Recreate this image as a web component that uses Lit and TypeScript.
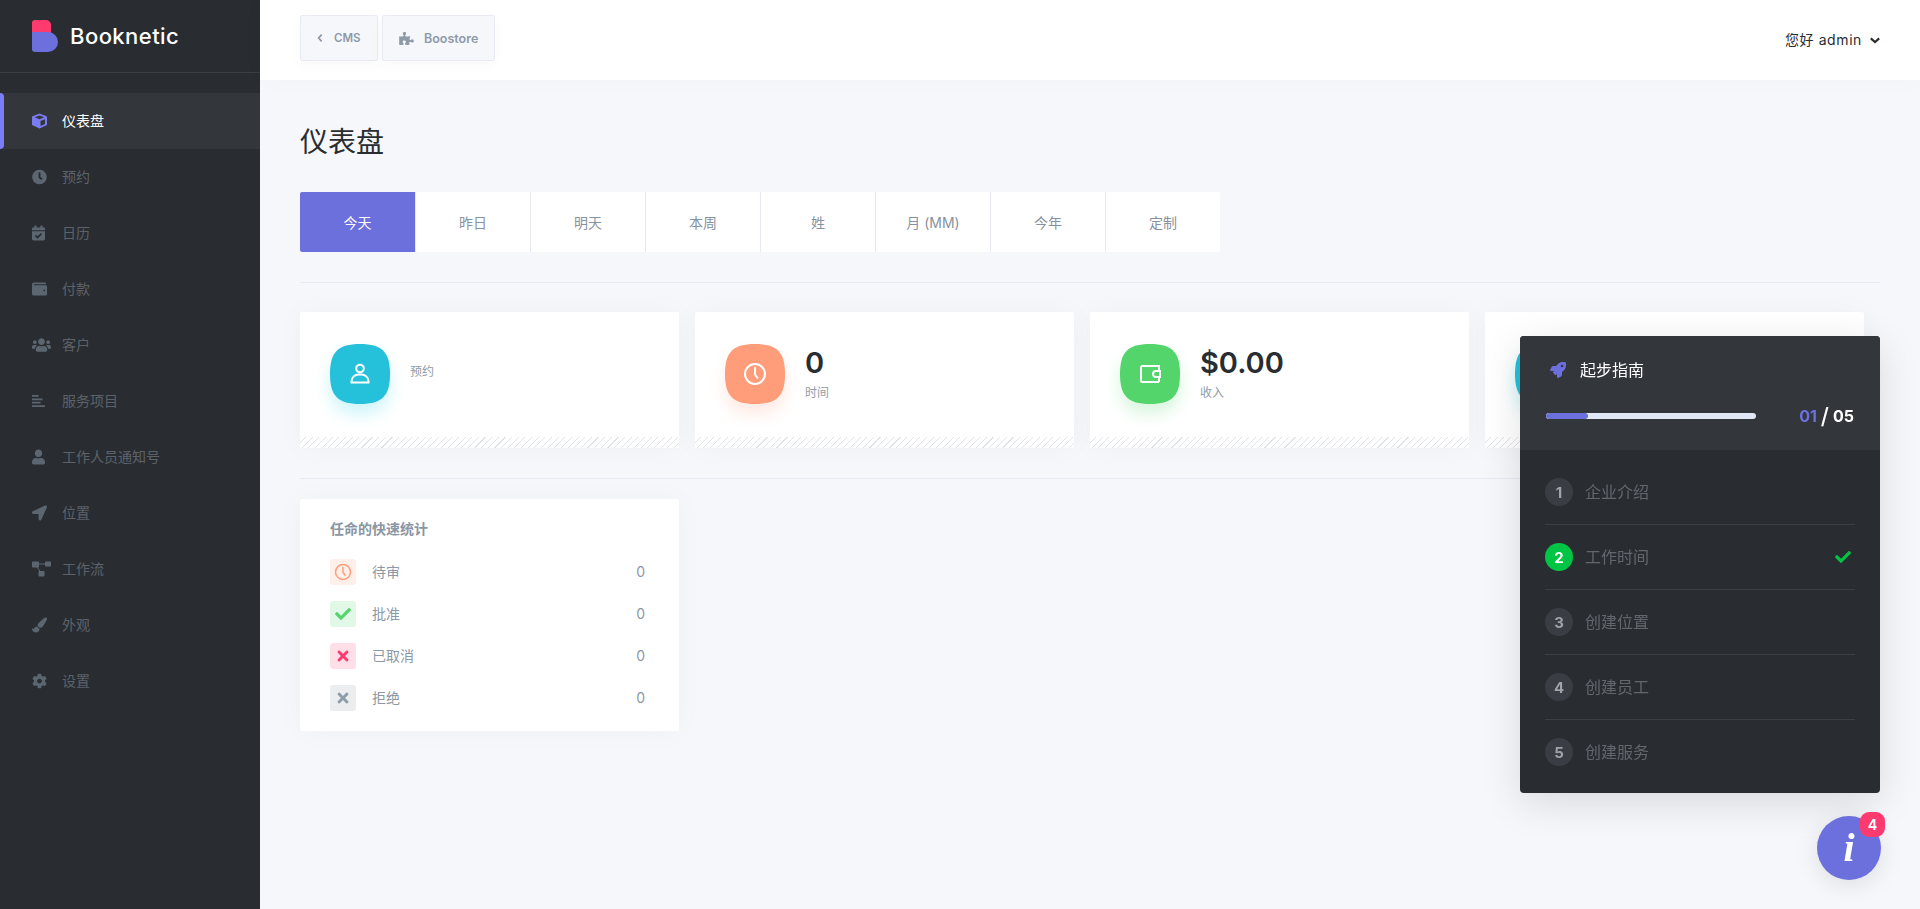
import { LitElement, css, html } from 'lit'
import { customElement } from 'lit/decorators.js'

// font awesome style glyphs, drawn inline since nothing can be loaded
const CLOCK = html`<svg viewBox="0 0 512 512"><path fill="currentColor" d="M256,8C119,8,8,119,8,256S119,504,256,504,504,393,504,256,393,8,256,8Zm92.49,313h0l-20,25a16,16,0,0,1-22.49,2.5h0l-67-49.72a40,40,0,0,1-15-31.23V112a16,16,0,0,1,16-16h32a16,16,0,0,1,16,16V256l58,42.5A16,16,0,0,1,348.49,321Z"/></svg>`
const CUBE = html`<svg viewBox="0 0 30 30"><path fill="currentColor" d="M15 0 29 5.5a1.5 1.5 0 0 1 1 1.4V22a1.5 1.5 0 0 1-.9 1.4L15 30 .9 23.4A1.5 1.5 0 0 1 0 22V6.900a1.500 1.500 0 0 1 1-1.400Z"/><path fill="#33363b" d="M15 4 24.500 7.600 15 11.300 5.500 7.600ZM17 15 26 11.500V21L17 25.200Z"/></svg>`
const CALENDAR = html`<svg viewBox="0 0 448 512"><path fill="currentColor" d="M96 0h48a16 16 0 0 1 16 16v48h128V16a16 16 0 0 1 16-16h48a16 16 0 0 1 16 16v48h48a32 32 0 0 1 32 32v64H0V96a32 32 0 0 1 32-32h48V16A16 16 0 0 1 96 0ZM0 192h448v272a48 48 0 0 1-48 48H48a48 48 0 0 1-48-48Zm338 96-24-24a12 12 0 0 0-17 0L189 371l-44-45a12 12 0 0 0-17 0l-24 24a12 12 0 0 0 0 17l76 77a12 12 0 0 0 17 0l141-139a12 12 0 0 0 0-17Z"/></svg>`
const WALLET = html`<svg viewBox="0 0 512 448"><path fill="currentColor" d="M461 96H80a16 16 0 0 1 0-32h384a16 16 0 0 0 16-16 48 48 0 0 0-48-48H64A64 64 0 0 0 0 64v320a64 64 0 0 0 64 64h397c28 0 51-21 51-48V144c0-27-23-48-51-48Zm-45 208a32 32 0 1 1 0-64 32 32 0 0 1 0 64Z"/></svg>`
const USERS = html`<svg viewBox="0 0 640 512"><path fill="currentColor" d="M96 224c35.300 0 64-28.700 64-64s-28.700-64-64-64-64 28.700-64 64 28.700 64 64 64zm448 0c35.300 0 64-28.700 64-64s-28.700-64-64-64-64 28.700-64 64 28.700 64 64 64zm32 32h-64c-17.600 0-33.500 7.100-45.100 18.600 40.300 22.100 68.900 62 75.100 109.400h66c17.700 0 32-14.300 32-32v-32c0-35.300-28.700-64-64-64zm-256 0c61.900 0 112-50.100 112-112S381.900 32 320 32 208 82.100 208 144s50.100 112 112 112zm76.800 32h-8.300c-20.800 10-43.900 16-68.500 16s-47.600-6-68.500-16h-8.300C179.600 288 128 339.600 128 403.200V432c0 26.500 21.500 48 48 48h288c26.500 0 48-21.500 48-48v-28.800c0-63.600-51.600-115.200-115.200-115.200zm-223.700-13.400C161.500 263.100 145.600 256 128 256H64c-35.300 0-64 28.700-64 64v32c0 17.700 14.300 32 32 32h65.900c6.300-47.400 34.900-87.300 75.200-109.400z"/></svg>`
const BARS = html`<svg viewBox="0 0 26 24"><path fill="currentColor" d="M0 0h13v3.600H0ZM0 6.800h21v3.600H0ZM0 13.600h17v3.600H0ZM0 20.400h26V24H0Z"/></svg>`
const USER = html`<svg viewBox="0 0 448 512"><path fill="currentColor" d="M224 256c70.700 0 128-57.300 128-128S294.700 0 224 0 96 57.300 96 128s57.300 128 128 128zm89.600 32h-16.700c-22.200 10.200-46.900 16-72.900 16s-50.600-5.800-72.900-16h-16.700C60.200 288 0 348.200 0 422.400V464c0 26.500 21.500 48 48 48h352c26.500 0 48-21.500 48-48v-41.600c0-74.200-60.200-134.400-134.400-134.400z"/></svg>`
const ARROW = html`<svg viewBox="0 0 512 512"><path fill="currentColor" d="M444.520 3.520L28.740 195.420c-47.970 22.390-31.980 92.750 19.190 92.750h175.910v175.910c0 51.170 70.360 67.170 92.750 19.190l191.900-415.780c15.990-38.390-25.590-79.970-63.970-63.970z"/></svg>`
const FLOW = html`<svg viewBox="0 0 38 30"><path fill="none" stroke="currentColor" stroke-width="2" d="M6 5H32M6 5 19 24"/><rect fill="currentColor" x="0" y="0" width="14" height="12" rx="1.500"/><rect fill="currentColor" x="26" y="0" width="12" height="10" rx="1.500"/><rect fill="currentColor" x="13" y="19" width="12" height="11" rx="1.500"/></svg>`
const BRUSH = html`<svg viewBox="0 0 512 512"><path fill="currentColor" d="M167.020 309.340c-40.120 2.580-76.530 17.860-97.190 72.300-2.350 6.210-8 9.980-14.590 9.980-11.110 0-45.460-27.670-55.250-34.350C0 439.620 37.930 512 128 512c75.860 0 128-43.770 128-120.190 0-3.110-.65-6.080-.97-9.130l-88.010-73.340zM457.890 0c-15.160 0-29.370 6.710-40.210 16.450C213.270 199.050 192 203.340 192 257.090c0 13.700 3.250 26.760 8.730 38.700l63.820 53.180c7.210 1.800 14.640 3.030 22.390 3.030 62.110 0 98.110-45.470 211.160-256.460 7.380-14.350 13.900-29.850 13.900-45.990C512 20.640 486 0 457.890 0z"/></svg>`
const COG = html`<svg viewBox="0 0 512 512"><path fill="currentColor" d="M487.400 315.700l-42.600-24.600c4.300-23.200 4.300-47 0-70.200l42.600-24.600c4.900-2.800 7.100-8.600 5.500-14-11.100-35.600-30-67.800-54.700-94.600-3.800-4.100-10-5.100-14.800-2.300L380.800 110c-17.900-15.400-38.500-27.300-60.800-35.100V25.800c0-5.600-3.900-10.500-9.400-11.700-36.700-8.200-74.300-7.800-109.200 0-5.500 1.200-9.400 6.100-9.400 11.700V75c-22.200 7.900-42.800 19.800-60.800 35.100L88.700 85.500c-4.900-2.800-11-1.900-14.800 2.300-24.700 26.700-43.600 58.900-54.700 94.600-1.700 5.400.6 11.200 5.500 14L67.300 221c-4.300 23.200-4.300 47 0 70.200l-42.600 24.600c-4.900 2.800-7.100 8.600-5.500 14 11.100 35.600 30 67.800 54.700 94.600 3.800 4.100 10 5.100 14.800 2.300l42.600-24.600c17.900 15.400 38.500 27.300 60.800 35.100v49.200c0 5.600 3.900 10.500 9.400 11.700 36.700 8.200 74.300 7.800 109.200 0 5.500-1.200 9.400-6.100 9.400-11.700v-49.200c22.200-7.900 42.800-19.800 60.800-35.100l42.600 24.600c4.900 2.800 11 1.900 14.800-2.300 24.700-26.700 43.600-58.900 54.700-94.600 1.500-5.500-.7-11.300-5.600-14.100zM256 336c-44.100 0-80-35.900-80-80s35.900-80 80-80 80 35.900 80 80-35.900 80-80 80z"/></svg>`
const PUZZLE = html`<svg viewBox="0 0 576 512"><path fill="currentColor" d="M519.442 288.651c-41.519 0-59.500 31.593-82.058 31.593C377.409 320.244 432 144 432 144s-196.288 80-196.288-3.297c0-35.827 36.288-46.250 36.288-85.985C272 19.216 243.885 0 210.539 0c-34.654 0-66.366 18.891-66.366 56.346 0 41.364 31.711 59.277 31.711 81.750C175.885 207.719 0 166.758 0 166.758v333.237s178.635 41.047 178.635-28.662c0-22.473-40-40.107-40-81.471 0-37.456 29.250-56.346 63.577-56.346 33.673 0 61.788 19.216 61.788 54.717 0 39.735-36.288 50.158-36.288 85.985 0 60.803 129.675 25.730 181.230 25.730 0 0-34.725-120.101 25.827-120.101 35.962 0 46.423 36.152 86.308 36.152C556.712 416 576 387.990 576 354.443c0-34.199-18.962-65.792-56.558-65.792z"/></svg>`
const ROCKET = html`<svg viewBox="0 0 512 512"><path fill="currentColor" d="M505.120 19.094c-1.189-5.531-6.658-11-12.207-12.188C460.716 0 435.507 0 410.407 0 307.175 0 245.269 55.203 199.052 128H94.838c-16.348.016-35.557 11.875-42.887 26.484L2.516 253.297A28.400 28.400 0 0 0 0 264a24.009 24.009 0 0 0 24.006 24h103.810l-22.475 22.469c-11.365 11.361-12.996 32.258 0 45.250l50.904 50.906c11.156 11.188 32.156 13.156 45.277 0l22.475-22.469V488a24.009 24.009 0 0 0 24.006 24 28.559 28.559 0 0 0 10.707-2.516l98.728-49.390c14.629-7.297 26.508-26.500 26.508-42.860V312.797c72.598-46.313 128.035-108.406 128.035-211.094.0-25.203.0-50.406-6.955-82.609ZM384.040 168a40 40 0 1 1 40.010-40 40.023 40.023 0 0 1-40.010 40Z"/></svg>`
const CHECK = html`<svg viewBox="0 0 512 512"><path fill="currentColor" d="M173.898 439.404l-166.400-166.400c-9.997-9.997-9.997-26.206 0-36.204l36.203-36.204c9.997-9.998 26.207-9.998 36.204 0L192 312.690 432.095 72.596c9.997-9.997 26.207-9.997 36.204 0l36.203 36.204c9.997 9.997 9.997 26.206 0 36.204l-294.400 294.401c-9.998 9.997-26.207 9.997-36.204-.001z"/></svg>`
const TIMES = html`<svg viewBox="0 0 352 512"><path fill="currentColor" d="M242.720 256l100.070-100.070c12.280-12.280 12.280-32.190 0-44.480l-22.240-22.240c-12.280-12.280-32.190-12.280-44.480 0L176 189.280 75.930 89.210c-12.280-12.280-32.190-12.280-44.480 0L9.210 111.450c-12.280 12.280-12.280 32.190 0 44.480L109.280 256 9.210 356.070c-12.280 12.280-12.280 32.190 0 44.480l22.240 22.240c12.280 12.280 32.200 12.280 44.480 0L176 322.720l100.070 100.070c12.280 12.280 32.200 12.280 44.480 0l22.240-22.240c12.280-12.280 12.280-32.190 0-44.480L242.720 256z"/></svg>`
const CHEV_LEFT = html`<svg viewBox="0 0 8 12"><path fill="none" stroke="currentColor" stroke-width="2.600" d="M6.500 1 2 6l4.500 5"/></svg>`
const CHEV_DOWN = html`<svg viewBox="0 0 12 8"><path fill="none" stroke="currentColor" stroke-width="2.600" d="M1 1.500 6 6l5-4.500"/></svg>`
const LINE_CLOCK = html`<svg viewBox="0 0 24 24"><circle cx="12" cy="12" r="10" fill="none" stroke="currentColor" stroke-width="2"/><path fill="none" stroke="currentColor" stroke-width="2" stroke-linecap="round" d="M12 6v6.500l2.500 3.500"/></svg>`
const LINE_USER = html`<svg viewBox="0 0 24 24"><circle cx="12" cy="6.500" r="3.800" fill="none" stroke="currentColor" stroke-width="2"/><path fill="none" stroke="currentColor" stroke-width="2" d="M3.500 20.500V19a7 7 0 0 1 7-6.500h3a7 7 0 0 1 7 6.500v1.500Z"/></svg>`
const LINE_WALLET = html`<svg viewBox="0 0 24 24"><path fill="none" stroke="currentColor" stroke-width="2" d="M21 20H4.500A1.500 1.500 0 0 1 3 18.500V5.500A1.500 1.500 0 0 1 4.500 4H21v4M21 16v4"/><path fill="none" stroke="currentColor" stroke-width="2" d="M22 9h-4a3 3 0 0 0 0 6h4Z"/></svg>`

const NAV = [
  { label: '仪表盘', icon: CUBE, w: 15, active: true },
  { label: '预约', icon: CLOCK, w: 15 },
  { label: '日历', icon: CALENDAR, w: 13 },
  { label: '付款', icon: WALLET, w: 15 },
  { label: '客户', icon: USERS, w: 19 },
  { label: '服务项目', icon: BARS, w: 13 },
  { label: '工作人员通知号', icon: USER, w: 13 },
  { label: '位置', icon: ARROW, w: 15 },
  { label: '工作流', icon: FLOW, w: 19 },
  { label: '外观', icon: BRUSH, w: 15 },
  { label: '设置', icon: COG, w: 15 },
]

const TABS = ['今天', '昨日', '明天', '本周', '姓', '月 (MM)', '今年', '定制']

// the fourth card sits under the guide panel, only its icon edge shows
const STATS = [
  { tone: 'teal', icon: LINE_USER, value: '', label: '预约' },
  { tone: 'orange', icon: LINE_CLOCK, value: '0', label: '时间' },
  { tone: 'green', icon: LINE_WALLET, value: '$0.00', label: '收入' },
  { tone: 'teal', icon: LINE_USER, value: '', label: '' },
]

const QUICK = [
  { tone: 'orange', icon: LINE_CLOCK, label: '待审' },
  { tone: 'green', icon: CHECK, label: '批准' },
  { tone: 'pink', icon: TIMES, label: '已取消' },
  { tone: 'gray', icon: TIMES, label: '拒绝' },
]

const STEPS = ['企业介绍', '工作时间', '创建位置', '创建员工', '创建服务']

@customElement('app-root')
export class AppRoot extends LitElement {
  render() {
    return html`
      <aside class="sidebar">
        <div class="brand">
          <svg class="logo" viewBox="0 0 26 32">
            <path fill="#ff3a6e" d="M3 0h11a5 5 0 0 1 5 5v9H0V3a3 3 0 0 1 3-3Z" />
            <path fill="#6c70dc" d="M0 12h16a10 10 0 0 1 0 20H3a3 3 0 0 1-3-3Z" />
          </svg>
          <span>Booknetic</span>
        </div>
        <nav class="nav">
          ${NAV.map(
            (n) => html`
              <a class="nav-item ${n.active ? 'active' : ''}">
                <span class="nav-slot"><span class="nav-icon" style="width: ${n.w}px">${n.icon}</span></span>
                <span class="nudge">${n.label}</span>
              </a>
            `
          )}
        </nav>
      </aside>

      <div class="main">
        <header class="topbar">
          <div class="top-btns">
            <a class="top-btn cms"><span class="chev">${CHEV_LEFT}</span>CMS</a>
            <a class="top-btn boost"><span class="puzzle">${PUZZLE}</span>Boostore</a>
          </div>
          <div class="user"><span class="nudge">您好 admin</span><span class="chev-down">${CHEV_DOWN}</span></div>
        </header>

        <div class="content">
          <h1>仪表盘</h1>
          <div class="tabs">
            ${TABS.map((t, i) => html`<div class="tab ${i === 0 ? 'on' : ''}">${t}</div>`)}
          </div>
          <hr class="rule first" />
          <div class="stats">
            ${STATS.map(
              (s) => html`
                <div class="stat">
                  <div class="stat-body">
                    <div class="blob ${s.tone}">
                      <svg class="blob-bg" viewBox="0 0 60 60">
                        <path fill="currentColor" d="M30 0C52 0 60 8 60 30S52 60 30 60 0 52 0 30 8 0 30 0Z" />
                      </svg>
                      <span class="blob-icon">${s.icon}</span>
                    </div>
                    <div class="stat-text">
                      ${s.value ? html`<div class="value">${s.value}</div>` : ''}
                      ${s.label ? html`<div class="label ${s.value ? '' : 'solo'}">${s.label}</div>` : ''}
                    </div>
                  </div>
                  <div class="stripe"></div>
                </div>
              `
            )}
          </div>
          <hr class="rule second" />
          <section class="quick">
            <div class="quick-title">任命的快速统计</div>
            ${QUICK.map(
              (q) => html`
                <div class="quick-row">
                  <span class="quick-icon ${q.tone}">${q.icon}</span>
                  <span class="quick-label"><span class="nudge">${q.label}</span></span>
                  <span class="quick-num nudge">0</span>
                </div>
              `
            )}
          </section>
        </div>
      </div>

      <div class="guide">
        <div class="guide-head">
          <div class="guide-title"><span class="rocket">${ROCKET}</span><span class="nudge">起步指南</span></div>
          <div class="guide-progress">
            <div class="bar"><div class="bar-fill" style="width: 20%"></div></div>
            <div class="count"><span class="now">01</span><span class="slash">/</span>05</div>
          </div>
        </div>
        <div class="guide-body">
          ${STEPS.map(
            (s, i) => html`
              <div class="step ${i === 1 ? 'done' : ''}">
                <span class="step-num">${i + 1}</span>
                <span class="step-label"><span class="nudge">${s}</span></span>
                ${i === 1 ? html`<span class="step-check">${CHECK}</span>` : ''}
              </div>
            `
          )}
        </div>
      </div>

      <div class="fab">
        <span class="fab-i">i</span>
        <span class="badge">4</span>
      </div>
    `
  }

  static styles = css`
    :host {
      display: flex;
      height: 100vh;
      overflow: hidden;
      background: #f5f7fb;
      font-family: Inter, 'Noto Sans CJK SC', sans-serif;
      color: #292d32;
    }
    svg {
      display: block;
      width: 100%;
      height: 100%;
    }
    .nudge {
      display: inline-block;
      padding-bottom: 2px;
    }

    .sidebar {
      width: 260px;
      flex: none;
      background: #292d32;
    }
    .brand {
      height: 72px;
      border-bottom: 1px solid #3b3f44;
      display: flex;
      align-items: center;
      padding-left: 32px;
      gap: 12px;
      color: #fff;
      font-size: 22px;
      font-weight: 500;
      letter-spacing: 0.45px;
    }
    .logo {
      width: 26px;
      height: 32px;
    }
    .nav {
      padding-top: 20px;
    }
    .nav-item {
      height: 56px;
      display: flex;
      align-items: center;
      padding-left: 32px;
      font-size: 14px;
      color: #5d6269;
      position: relative;
    }
    .nav-slot {
      width: 30px;
      flex: none;
      display: flex;
      align-items: center;
    }
    .nav-icon {
      display: block;
      height: 16px;
      color: #5c6670;
    }
    .nav-item.active {
      background: #33363b;
      color: #fff;
    }
    .nav-item.active .nav-icon {
      color: #7a7cf0;
    }
    .nav-item.active::before {
      content: '';
      position: absolute;
      left: 0;
      top: 0;
      bottom: 0;
      width: 4px;
      background: #7a7cf8;
      border-radius: 0 4px 4px 0;
    }

    .main {
      flex: 1;
      min-width: 0;
    }
    .topbar {
      height: 80px;
      background: #fff;
      display: flex;
      align-items: center;
      justify-content: space-between;
      padding: 0 40px;
      box-shadow: 0 0 30px rgba(0, 0, 0, 0.02);
    }
    .top-btns {
      display: flex;
      gap: 4px;
      margin-top: -4px;
    }
    .top-btn {
      height: 46px;
      box-sizing: border-box;
      display: flex;
      align-items: center;
      background: #f5f7fb;
      border: 1px solid #e8ebf3;
      border-radius: 2px;
      box-shadow: 0 4px 14px rgba(0, 0, 0, 0.03);
      font-size: 12.5px;
      font-weight: 600;
      color: #8f9aa8;
    }
    .cms {
      width: 78px;
      padding-left: 16px;
      font-size: 11.5px;
    }
    .boost {
      width: 113px;
      padding-left: 16px;
    }
    .chev {
      width: 6px;
      height: 8px;
      margin-right: 11px;
    }
    .puzzle {
      width: 15px;
      height: 13px;
      margin-right: 10px;
    }
    .user {
      display: flex;
      align-items: center;
      font-size: 14px;
      letter-spacing: 0.6px;
      gap: 8px;
    }
    .chev-down {
      width: 10px;
      height: 7px;
    }

    .content {
      padding: 40px 40px 0;
    }
    h1 {
      margin: 0 0 29px;
      padding-top: 1px;
      font-size: 28px;
      font-weight: 400;
      line-height: 42px;
    }
    .tabs {
      display: flex;
      width: 920px;
      height: 60px;
      background: #fff;
      border-radius: 2px;
    }
    .tab {
      flex: 0 0 115px;
      box-sizing: border-box;
      display: flex;
      align-items: center;
      justify-content: center;
      font-size: 14px;
      color: #8792a1;
      border-left: 1px solid #e6e9f2;
    }
    .tab.on {
      border-left: 0;
      background: #6c70dc;
      color: #fff;
      border-radius: 2px 0 0 2px;
    }
    .rule {
      margin: 0;
      border: 0;
      height: 1px;
      background: #e6e9f2;
    }
    .rule.first {
      margin-top: 30px;
    }
    .rule.second {
      margin-top: 30px;
    }

    .stats {
      display: grid;
      grid-template-columns: repeat(4, 379px);
      gap: 16px;
      margin-top: 29px;
    }
    .stat {
      background: #fff;
      height: 136px;
      display: flex;
      flex-direction: column;
      border-radius: 2px;
      box-shadow: 0 0 30px rgba(0, 0, 0, 0.03);
    }
    .stat-body {
      flex: 1;
      display: flex;
      align-items: center;
      padding: 0 0 1px 30px;
      gap: 20px;
    }
    .stat-text {
      margin-bottom: 2px;
    }
    .stripe {
      height: 11px;
      background: repeating-linear-gradient(135deg, #fff 0 3.9px, #e0e3e8 3.9px 4.7px);
    }
    .blob {
      position: relative;
      width: 60px;
      height: 60px;
      flex: none;
    }
    .blob.teal {
      color: #25c0d9;
      filter: drop-shadow(0 10px 8px rgba(37, 210, 230, 0.22));
    }
    .blob.orange {
      color: #ff9c7a;
      filter: drop-shadow(0 10px 8px rgba(255, 156, 122, 0.22));
    }
    .blob.green {
      color: #53d56c;
      filter: drop-shadow(0 10px 8px rgba(83, 213, 108, 0.22));
    }
    .blob-icon {
      position: absolute;
      inset: 18px;
      color: #fff;
    }
    .value {
      font-size: 29px;
      font-weight: 600;
      line-height: 36px;
      color: #292d32;
    }
    .label {
      font-size: 12px;
      line-height: 18px;
      color: #8f9ca9;
      margin-top: 3px;
    }
    .label.solo {
      margin: 0 0 3px;
    }

    .quick {
      width: 379px;
      height: 232px;
      margin-top: 20px;
      box-sizing: border-box;
      padding: 20px 30px 0;
      background: #fff;
      border-radius: 2px;
      box-shadow: 0 0 30px rgba(0, 0, 0, 0.03);
    }
    .quick-title {
      font-size: 14px;
      font-weight: 700;
      line-height: 20px;
      color: #8a96a3;
      margin-bottom: 20px;
    }
    .quick-row {
      display: flex;
      align-items: center;
      height: 26px;
      margin-bottom: 16px;
      font-size: 14px;
      color: #8c98a4;
    }
    .quick-icon {
      width: 26px;
      height: 26px;
      box-sizing: border-box;
      padding: 5px;
      border-radius: 3px;
      margin-right: 16px;
      display: flex;
      justify-content: center;
    }
    .quick-icon.orange {
      padding: 4px;
      background: #ffefe9;
      color: #ff9c7a;
    }
    .quick-icon.green {
      background: #e2f8e6;
      color: #53d56c;
    }
    .quick-icon.pink {
      background: #ffdfe7;
      color: #ff3a6e;
    }
    .quick-icon.gray {
      background: #ecedef;
      color: #8f9ca9;
    }
    .quick-label {
      flex: 1;
    }
    .quick-num {
      margin-right: 4px;
    }

    .guide {
      position: fixed;
      right: 40px;
      bottom: 116px;
      width: 360px;
      border-radius: 4px;
      overflow: hidden;
      background: #292d32;
      box-shadow: 0 10px 40px rgba(0, 0, 0, 0.12);
    }
    .guide-head {
      height: 114px;
      box-sizing: border-box;
      padding: 22px 26px 0;
      background: #33363b;
    }
    .guide-title {
      display: flex;
      align-items: center;
      height: 24px;
      font-size: 16px;
      color: #fff;
    }
    .rocket {
      width: 16px;
      height: 16px;
      margin: 0 14px 0 4px;
      color: #6c70dc;
    }
    .guide-progress {
      display: flex;
      align-items: center;
      justify-content: space-between;
      height: 24px;
      margin-top: 22px;
    }
    .bar {
      width: 210px;
      height: 6px;
      border-radius: 3px;
      background: #e1e9f4;
      overflow: hidden;
    }
    .bar-fill {
      height: 100%;
      background: #6c70dc;
      border-radius: 3px;
    }
    .count {
      display: flex;
      align-items: center;
      font-size: 16px;
      font-weight: 700;
      color: #fff;
    }
    .now {
      color: #6c70dc;
    }
    .slash {
      font-size: 22px;
      font-weight: 500;
      margin: 0 4px;
    }
    .guide-body {
      padding: 10px 25px 9px;
    }
    .step {
      display: flex;
      align-items: center;
      height: 64px;
      border-bottom: 1px solid #3b3f44;
      font-size: 16px;
      color: #62676e;
    }
    .step:last-child {
      border-bottom: 0;
    }
    .step-num {
      width: 28px;
      height: 28px;
      border-radius: 50%;
      background: #3a3e44;
      color: #a0a3a7;
      font-size: 15px;
      font-weight: 700;
      display: flex;
      align-items: center;
      justify-content: center;
      margin-right: 12px;
    }
    .done .step-num {
      background: #00c444;
      color: #fff;
    }
    .step-label {
      flex: 1;
    }
    .step-check {
      width: 16px;
      height: 16px;
      color: #00c444;
      margin-right: 4px;
    }

    .fab {
      position: fixed;
      right: 39px;
      bottom: 29px;
      width: 64px;
      height: 64px;
      border-radius: 50%;
      background: #6c70dc;
      box-shadow: 0 5px 25px rgba(0, 0, 0, 0.1);
      display: flex;
      align-items: center;
      justify-content: center;
    }
    .fab-i {
      color: #fff;
      font-family: 'Liberation Serif', serif;
      font-style: italic;
      font-weight: 700;
      font-size: 40px;
      line-height: 1;
    }
    .badge {
      position: absolute;
      top: -4px;
      right: -4px;
      width: 25px;
      height: 25px;
      border-radius: 9px;
      background: #ff3a6e;
      color: #fff;
      font-size: 14px;
      font-weight: 700;
      display: flex;
      align-items: center;
      justify-content: center;
    }
  `
}

declare global {
  interface HTMLElementTagNameMap {
    'app-root': AppRoot
  }
}
